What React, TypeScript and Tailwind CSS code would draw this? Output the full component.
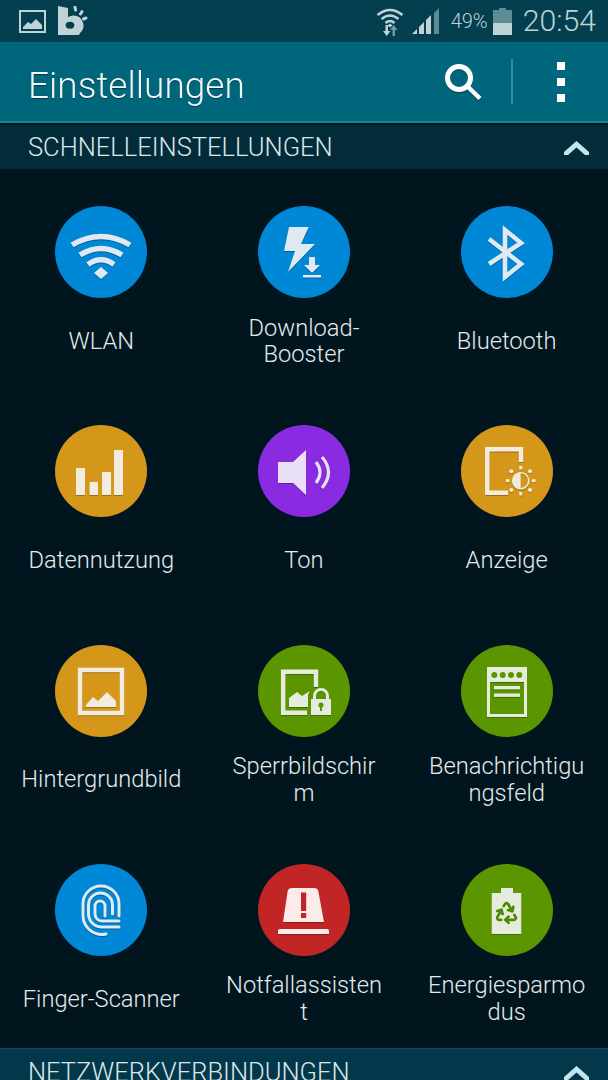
import React from "react";
import { Recycle } from "lucide-react";

const BLUE = "bg-[#0087d6]";
const AMBER = "bg-[#d49719]";
const PURPLE = "bg-[#8a2be2]";
const GREEN = "bg-[#5b9600]";
const RED = "bg-[#c12526]";

function Glyph({ children }: { children: React.ReactNode }) {
  return (
    <svg viewBox="0 0 92 92" className="w-[92px] h-[92px] drop-shadow-[0_1px_0_rgba(0,0,0,0.28)]">
      {children}
    </svg>
  );
}

const W = "#dfe9f1";
const Y = "#f2ece0";
const V = "#e9e0f5";
const G = "#e6ecdd";
const R = "#fbecea";

const icons: Record<string, React.ReactNode> = {
  wifi: (
    <Glyph>
      <g fill="none" stroke={W} strokeWidth="5.5">
        <path d="M17 39 Q46 22 75 39" />
        <path d="M25 49 Q46 36 67 49" />
        <path d="M33 58.5 Q46 49 59 58.5" />
      </g>
      <path d="M39 67 L46 61 L53 67 L46 73 Z" fill={W} />
    </Glyph>
  ),
  booster: (
    <Glyph>
      <path d="M31 21 H50.7 L43 38 H57 L30 66 L37 45 H26 Z" fill={W} />
      <path d="M51 51 H57 V59 H62 L54 67 L46 59 H51 Z" fill={W} />
      <rect x="45" y="69" width="18" height="2.5" fill={W} />
    </Glyph>
  ),
  bluetooth: (
    <Glyph>
      <path d="M28 33 L60 58 L44 71 V24 L60 37 L28 58" fill="none" stroke={W} strokeWidth="4.6" />
    </Glyph>
  ),
  data: (
    <Glyph>
      <g fill={Y}>
        <rect x="21" y="43" width="9" height="27" />
        <rect x="34.5" y="57" width="8.5" height="13" />
        <rect x="47" y="47" width="9" height="23" />
        <rect x="59" y="25" width="9" height="45" />
      </g>
    </Glyph>
  ),
  sound: (
    <Glyph>
      <path d="M20 37 H35 L48 25 V70 L35 58 H20 Z" fill={V} />
      <g fill="none" stroke={V} strokeWidth="3.2">
        <path d="M58 37 Q66 47.5 58 58" />
        <path d="M64 32 Q77 47.5 64 63" />
      </g>
    </Glyph>
  ),
  display: (
    <Glyph>
      <path d="M60 37 V24.3 H26.3 V67.7 H47" fill="none" stroke={Y} strokeWidth="4.5" />
      <circle cx="59.7" cy="55.7" r="8" fill="none" stroke={Y} strokeWidth="1.6" />
      <path d="M59.7 47.7 A8 8 0 0 0 59.7 63.7 Z" fill={Y} />
      <g fill={Y}>
        <rect x="58.2" y="41" width="3" height="3.5" />
        <rect x="58.2" y="67" width="3" height="3.5" />
        <rect x="45" y="54.2" width="3.5" height="3" />
        <rect x="71" y="54.2" width="3.5" height="3" />
        <circle cx="50.3" cy="46.3" r="2" />
        <circle cx="69" cy="46.3" r="2" />
        <circle cx="50.3" cy="65" r="2" />
        <circle cx="69" cy="65" r="2" />
      </g>
    </Glyph>
  ),
  wallpaper: (
    <Glyph>
      <rect x="25" y="25" width="42" height="43" fill="none" stroke={Y} strokeWidth="4.5" />
      <path d="M31 62 V60 L38 52 L43 56 L52 47 L61 56 V62 Z" fill={Y} />
    </Glyph>
  ),
  lock: (
    <Glyph>
      <path d="M58 42 V26.8 H25.2 V67.8 H49" fill="none" stroke={G} strokeWidth="4.5" />
      <path d="M31 62 V53 L39 47 L44 51 L52 46 L50 50 V62 Z" fill={G} />
      <rect x="53" y="54" width="20" height="16" fill={G} />
      <path d="M56.5 55 V51 A6.5 6.5 0 0 1 69.5 51 V55" fill="none" stroke={G} strokeWidth="3" />
      <circle cx="63" cy="60" r="2.6" fill="#5b9600" />
      <rect x="62" y="60" width="2" height="6" fill="#5b9600" />
    </Glyph>
  ),
  panel: (
    <Glyph>
      <rect x="27.5" y="23.5" width="37" height="47" fill="none" stroke={G} strokeWidth="3" />
      <rect x="26" y="22" width="40" height="15" fill={G} />
      <g fill="#5b9600">
        <circle cx="33.3" cy="30" r="3" />
        <circle cx="41.7" cy="30" r="3" />
        <circle cx="50" cy="30" r="3" />
        <circle cx="58.3" cy="30" r="3" />
      </g>
      <rect x="33" y="41" width="26" height="3.4" fill={G} />
      <rect x="33" y="48.5" width="26" height="3.4" fill={G} />
    </Glyph>
  ),
  finger: (
    <Glyph>
      <g fill="none" stroke={W} strokeWidth="3" strokeLinecap="round">
        <path d="M64 52 V40 A18 18 0 0 0 28 40 V52 A19 19 0 0 0 51 70" />
        <path d="M57.5 50 V41 A12 12 0 0 0 33.5 41 V50 A13 13 0 0 0 46 63 H64" />
        <path d="M50 52 V42 A5 5 0 0 0 40 42 V50 A7 7 0 0 0 47 57 H64" />
      </g>
    </Glyph>
  ),
  alarm: (
    <Glyph>
      <path d="M34 24 H56 Q60 24 60.5 28 L66 58 H25 L29.5 28 Q30 24 34 24 Z" fill={R} />
      <rect x="43" y="28.5" width="5.2" height="18.5" fill="#c12526" />
      <rect x="43" y="49" width="5.2" height="5" fill="#c12526" />
      <path d="M22 65 H69 Q71 65 71 67 V70 H20 V67 Q20 65 22 65 Z" fill={R} />
    </Glyph>
  ),
  battery: (
    <Glyph>
      <rect x="40" y="24" width="12" height="6" fill={G} />
      <rect x="30.7" y="29" width="29.6" height="41" fill={G} />
      <Recycle x={33} y={36} width={25} height={25} color="#4a8a00" strokeWidth={2.6} />
    </Glyph>
  ),
};

const items: { key: string; bg: string; lines: string[] }[] = [
  { key: "wifi", bg: BLUE, lines: ["WLAN"] },
  { key: "booster", bg: BLUE, lines: ["Download-", "Booster"] },
  { key: "bluetooth", bg: BLUE, lines: ["Bluetooth"] },
  { key: "data", bg: AMBER, lines: ["Datennutzung"] },
  { key: "sound", bg: PURPLE, lines: ["Ton"] },
  { key: "display", bg: AMBER, lines: ["Anzeige"] },
  { key: "wallpaper", bg: AMBER, lines: ["Hintergrundbild"] },
  { key: "lock", bg: GREEN, lines: ["Sperrbildschir", "m"] },
  { key: "panel", bg: GREEN, lines: ["Benachrichtigu", "ngsfeld"] },
  { key: "finger", bg: BLUE, lines: ["Finger-Scanner"] },
  { key: "alarm", bg: RED, lines: ["Notfallassisten", "t"] },
  { key: "battery", bg: GREEN, lines: ["Energiesparmo", "dus"] },
];

function Chevron() {
  return (
    <svg width="25" height="14" viewBox="0 0 25 14">
      <path d="M12.5 0 L25 11 L25 14 L21 14 L12.5 6.5 L4 14 L0 14 L0 11 Z" fill="#c3e6ec" />
    </svg>
  );
}

function SectionHeader({ title, className }: { title: string; className: string }) {
  return (
    <div className={`flex items-center justify-between pl-[28px] pr-[19px] ${className}`}>
      <span className="text-[25.5px] font-light text-[#dbe7ea] leading-none">{title}</span>
      <Chevron />
    </div>
  );
}

function StatusBar() {
  const c = "#bfd2d6";
  return (
    <div className="h-[42px] bg-[#033f4e] flex items-center pl-[19px] pr-[12px] text-[#bfd2d6]">
      <svg width="27" height="23" viewBox="0 0 27 23">
        <rect x="1" y="1" width="25" height="21" fill="none" stroke={c} strokeWidth="2" />
        <path d="M4 19 V17 L9 12 L12 14 L17 9 L23 15 V19 Z" fill={c} />
      </svg>
      <svg width="30" height="30" viewBox="0 0 30 30" className="ml-[12px]">
        <path
          d="M0 0 L10 2 V11 Q13 9.5 15 9.5 A10 10 0 0 1 22 27 L21 29 H0 Z M12 16 A3.4 3.4 0 1 0 12 22.5 A3.4 3.4 0 1 0 12 16 Z"
          fill={c}
          fillRule="evenodd"
        />
        <g stroke={c} strokeWidth="3" strokeLinecap="round">
          <path d="M17 1 L17.5 4" />
          <path d="M24 5.5 L22.5 8" />
          <path d="M28 12 L25.5 13" />
        </g>
      </svg>
      <div className="flex-1" />
      <svg width="28" height="29" viewBox="0 0 28 29">
        <g fill="none" stroke={c} strokeWidth="2.6">
          <path d="M1.5 8 Q14 -2 26.5 8" />
          <path d="M5.5 12 Q14 5 22.5 12" />
          <path d="M9.5 16 Q14 12 18.5 16" />
        </g>
        <path d="M11.5 18.5 L14 16.5 L16.5 18.5 L14 20.5 Z" fill={c} />
        <path d="M9.5 18 H12 V24 H14.5 L10.7 29 L7 24 H9.5 Z" fill={c} />
        <path d="M16.5 29 H19 V23 H21.5 L17.7 18 L14 23 H16.5 Z" fill="#6f9aa3" />
      </svg>
      <svg width="27" height="26" viewBox="0 0 27 26" className="ml-[8px]">
        <path d="M0 26 L5 21 V26 Z" fill={c} />
        <path d="M7 26 V19 L12 14 V26 Z" fill={c} />
        <path d="M14 26 V12 L19 7 V26 Z" fill={c} />
        <path d="M22 26 V5 L27 0 V26 Z" fill="#5d8a93" />
      </svg>
      <span className="ml-[12px] text-[20px] leading-none text-[#bfd2d6] font-light w-[37px]">49%</span>
      <svg width="19" height="27" viewBox="0 0 19 27" className="ml-[5px]">
        <rect x="6" y="0" width="7" height="3" fill="#5d8a93" />
        <rect x="0" y="2" width="19" height="14" fill="#5d8a93" />
        <rect x="0" y="15" width="19" height="12" fill={c} />
      </svg>
      <span className="ml-[11px] text-[30.2px] leading-none font-light text-[#bfd2d6]">20:54</span>
    </div>
  );
}

function Toolbar() {
  return (
    <div className="h-[81px] bg-[#00667c] border-b-[2px] border-b-[#1d8190] flex items-center pl-[28px]">
      <span className="text-[37px] font-light text-[#f1f7f8] leading-none pt-[8px] drop-shadow-[0_1px_0_rgba(0,0,0,0.4)]">
        Einstellungen
      </span>
      <div className="flex-1" />
      <svg width="40" height="40" viewBox="0 0 40 40" className="mr-[28px] drop-shadow-[0_1px_0_rgba(0,0,0,0.3)]">
        <circle cx="16" cy="16" r="11.5" fill="none" stroke="#fff" strokeWidth="5" />
        <path d="M24 24 L37 36.5" stroke="#fff" strokeWidth="4.5" />
      </svg>
      <div className="w-[2px] h-[45px] bg-[#3c8a9b]" />
      <div className="flex flex-col gap-[8px] ml-[44px] mr-[43px] pt-[1px]">
        <div className="w-[8px] h-[8px] bg-white" />
        <div className="w-[8px] h-[8px] bg-white" />
        <div className="w-[8px] h-[8px] bg-white" />
      </div>
    </div>
  );
}

export default function App() {
  return (
    <div className="w-[608px] h-[1080px] overflow-hidden bg-[#00151d] [font-family:Roboto,sans-serif]">
      <StatusBar />
      <Toolbar />
      <SectionHeader
        title="SCHNELLEINSTELLUNGEN"
        className="h-[46px] pt-[2px] bg-[#032c3b] border-t-[2px] border-t-[#01161f]"
      />
      <div className="grid grid-cols-3 h-[879px] auto-rows-[219.33px]">
        {items.map((it) => (
          <div key={it.key} className="flex flex-col items-center pt-[37px]">
            <div className={`w-[92px] h-[92px] rounded-full ${it.bg}`}>{icons[it.key]}</div>
            <div className="mt-[16px] h-[54px] flex flex-col items-center justify-center text-[23.7px] leading-[26.5px] font-light text-[#e4ebed] whitespace-nowrap">
              {it.lines.map((l) => (
                <span key={l}>{l}</span>
              ))}
            </div>
          </div>
        ))}
      </div>
      <SectionHeader
        title="NETZWERKVERBINDUNGEN"
        className="h-[46px] pt-[2px] bg-[#03384a] border-t-[1px] border-t-[#0a4a5a]"
      />
    </div>
  );
}
